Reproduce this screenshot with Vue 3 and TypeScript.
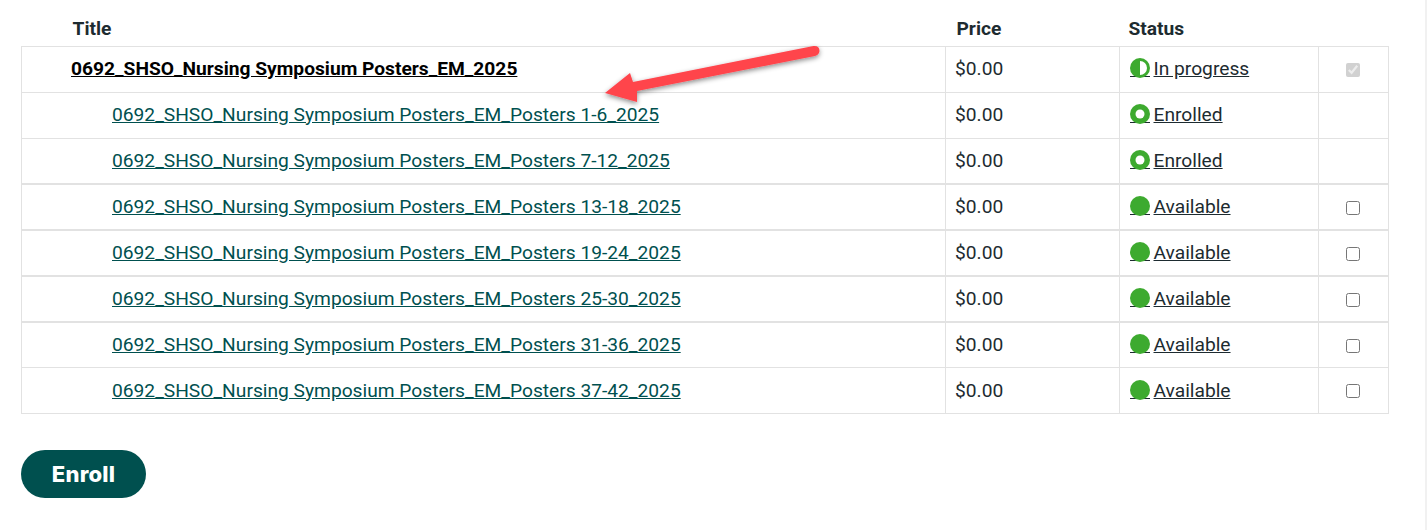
<script setup lang="ts">
interface Row { title: string; status: 'enrolled' | 'available'; label: string; open: boolean; thick: boolean; short: boolean; low: boolean }
const base = '0692_SHSO_Nursing Symposium Posters_EM_Posters '
const rows: Row[] = [
  { title: base + '1-6_2025', status: 'enrolled', label: 'Enrolled', open: false, thick: false, short: false, low: false },
  { title: base + '7-12_2025', status: 'enrolled', label: 'Enrolled', open: false, thick: false, short: false, low: true },
  { title: base + '13-18_2025', status: 'available', label: 'Available', open: true, thick: true, short: false, low: false },
  { title: base + '19-24_2025', status: 'available', label: 'Available', open: true, thick: true, short: false, low: false },
  { title: base + '25-30_2025', status: 'available', label: 'Available', open: true, thick: true, short: false, low: false },
  { title: base + '31-36_2025', status: 'available', label: 'Available', open: true, thick: true, short: true, low: true },
  { title: base + '37-42_2025', status: 'available', label: 'Available', open: true, thick: false, short: false, low: true },
]
</script>

<template>
  <div class="page">
    <div class="scroll-edge"></div>
    <table class="grid">
      <colgroup>
        <col class="c-title" />
        <col class="c-price" />
        <col class="c-status" />
        <col class="c-check" />
      </colgroup>
      <thead>
        <tr>
          <th class="h-title">Title</th>
          <th class="h-price">Price</th>
          <th class="h-status">Status</th>
          <th></th>
        </tr>
      </thead>
      <tbody>
        <tr>
          <td class="parent"><a href="#">0692_SHSO_Nursing Symposium Posters_EM_2025</a></td>
          <td class="price">$0.00</td>
          <td class="status">
            <span class="dot"><svg viewBox="0 0 20 20" width="20" height="20"><circle cx="10" cy="10" r="10" fill="#3daa2f" /><path d="M10 3a7 7 0 0 1 0 14z" fill="#fff" /></svg></span><a href="#" class="stat">In progress</a>
          </td>
          <td class="chk"><input type="checkbox" checked disabled /></td>
        </tr>
        <tr v-for="r in rows" :key="r.title" :class="{ thick: r.thick, short: r.short, low: r.low }">
          <td class="child"><a href="#">{{ r.title }}</a></td>
          <td class="price">$0.00</td>
          <td class="status">
            <span class="dot">
              <svg viewBox="0 0 20 20" width="20" height="20">
                <circle cx="10" cy="10" r="10" fill="#3daa2f" />
                <circle v-if="r.status === 'enrolled'" cx="10" cy="10" r="4.5" fill="#fff" />
              </svg>
            </span><a href="#" class="stat">{{ r.label }}</a>
          </td>
          <td class="chk"><input v-if="r.open" type="checkbox" /></td>
        </tr>
      </tbody>
    </table>
    <button class="enroll" type="button">Enroll</button>

    <svg class="arrow" width="240" height="80" viewBox="600 40 240 80">
      <defs>
        <filter id="sh" x="-10%" y="-30%" width="120%" height="170%">
          <feDropShadow dx="0" dy="2" stdDeviation="2.5" flood-color="#000" flood-opacity=".45" />
        </filter>
      </defs>
      <path filter="url(#sh)" fill="#ff444c" d="M605 93 L630 73 L633 82 L813.5 46 Q819.5 45.5 819.5 51 Q819 55 815 56 L637 91 L637 102 Z" />
    </svg>
  </div>
</template>

<style>
html, body { margin: 0; background: #fff; }
</style>

<style scoped>
.page {
  position: relative;
  width: 1427px;
  height: 530px;
  overflow: hidden;
  padding: 5px 0 0 21px;
  box-sizing: border-box;
  font-family: Roboto, "Liberation Sans", sans-serif;
  font-size: 19.2px;
  color: #1d2b30;
}
.scroll-edge {
  position: absolute;
  top: 0;
  bottom: 0;
  right: 0;
  width: 2px;
  background: #f1f1f1;
}
.grid {
  border-collapse: collapse;
  table-layout: fixed;
  width: 1367px;
}
.c-title { width: 924px; }
.c-price { width: 174px; }
.c-status { width: 199px; }
.c-check { width: 70px; }
th {
  height: 41px;
  padding: 6px 0 0;
  box-sizing: border-box;
  text-align: left;
  font-weight: 700;
  font-size: 19.2px;
  vertical-align: middle;
}
.h-title { padding-left: 51px; }
.h-price { padding-left: 11px; }
.h-status { padding-left: 9px; }
td {
  padding: 0 0 1px;
  box-sizing: border-box;
  border: 1px solid #e2e2e2;
  vertical-align: middle;
  line-height: 22px;
}
tbody tr { height: 46px; }
tbody tr.short { height: 45px; }
tbody tr.thick td { border-top-width: 2px; }
tbody tr.low td:not(.chk) { padding-top: 1px; padding-bottom: 0; }
.parent { padding-left: 49px; font-weight: 700; }
.parent a { color: #000; }
.child { padding-left: 90px; }
.child a { color: #00504f; }
.price { padding-left: 9px; }
.status { padding-left: 10px; white-space: nowrap; }
.stat { color: #1d2b30; }
.dot {
  position: relative;
  display: inline-block;
  width: 20px;
  height: 20px;
  margin-right: 3.5px;
  vertical-align: -3px;
}
.dot::after {
  content: "";
  position: absolute;
  left: 0;
  right: 0;
  bottom: 1px;
  height: 1px;
  background: #1d2b30;
}
.dot svg { display: block; position: relative; z-index: 1; }
.chk { text-align: center; padding: 0 2px 0 0; }
.chk input {
  width: 14px;
  height: 14px;
  margin: 0;
  vertical-align: middle;
}
.enroll {
  display: block;
  margin-top: 36px;
  width: 125px;
  height: 48px;
  border: 0;
  border-radius: 24px;
  background: #00504f;
  color: #fff;
  font-family: Inter, "Open Sans", sans-serif;
  font-weight: 800;
  font-size: 22px;
  letter-spacing: 0.2px;
  padding: 0;
}
.arrow {
  position: absolute;
  left: 600px;
  top: 40px;
  pointer-events: none;
}
</style>
